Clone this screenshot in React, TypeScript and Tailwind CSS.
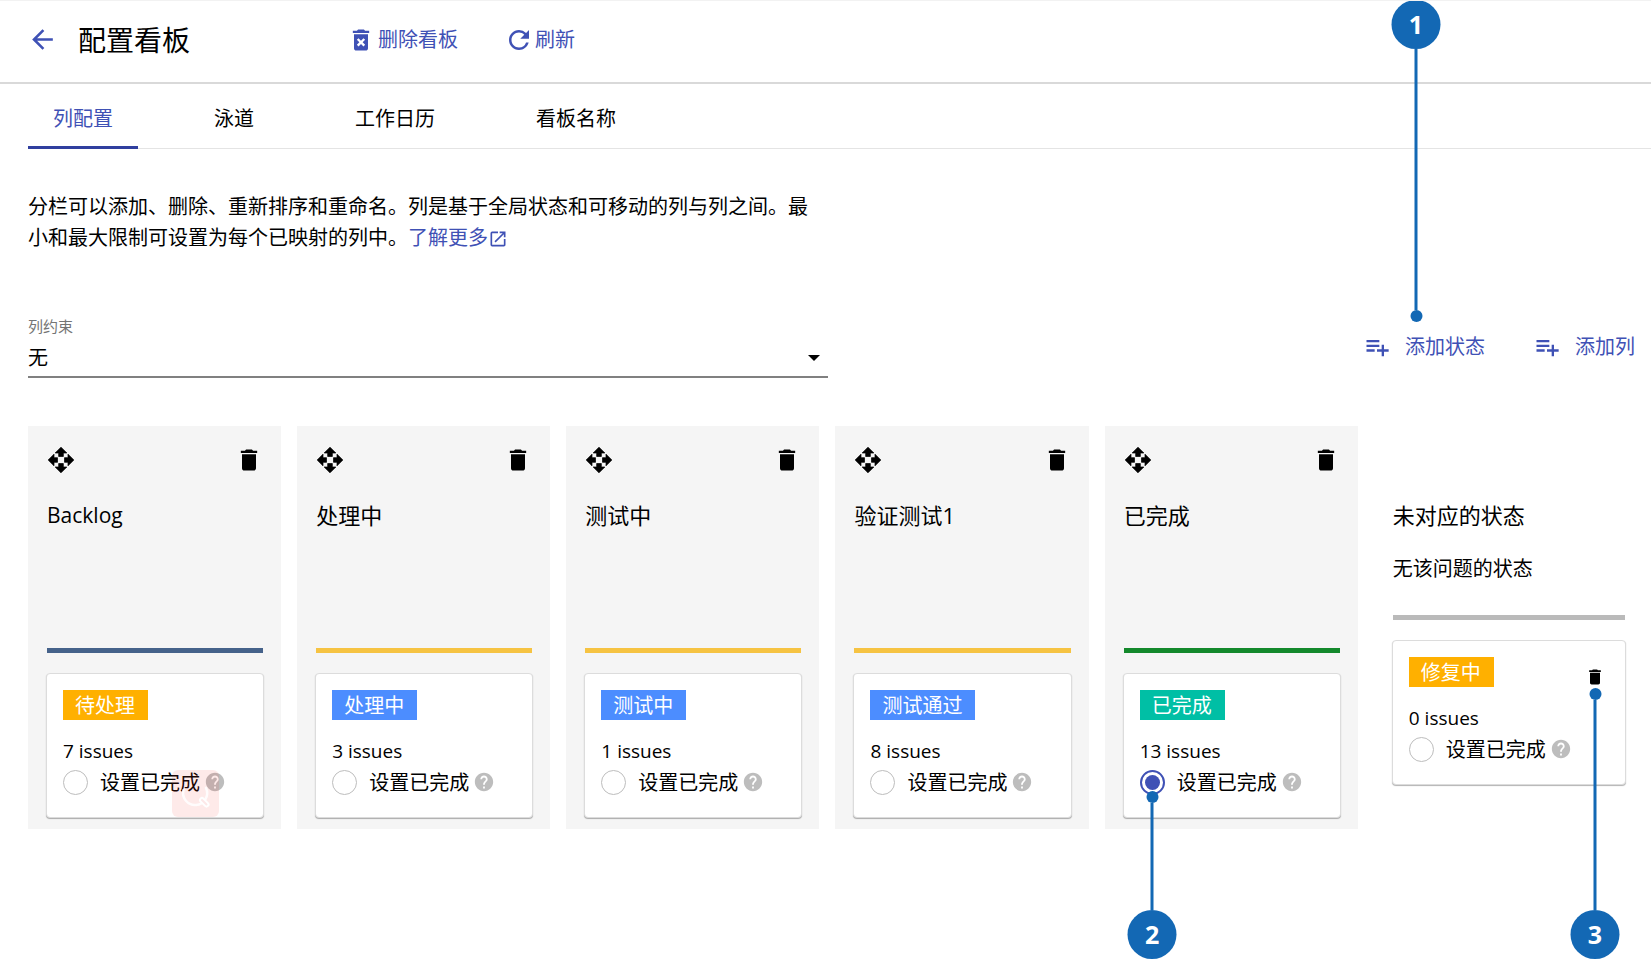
import React from "react";
import {
  MdArrowBack,
  MdDelete,
  MdDeleteForever,
  MdHelp,
  MdOpenInNew,
  MdPlaylistAdd,
  MdRefresh,
} from "react-icons/md";

type Status = {
  id: string;
  tag: string;
  tagClass: string;
  issues: number;
  done?: boolean;
};

type Column = {
  title: string;
  titleClass: string;
  barClass: string;
  status: Status;
};

const columns: Column[] = [
  {
    title: "Backlog",
    titleClass: "text-[21px]",
    barClass: "bg-[#45628a]",
    status: { id: "todo", tag: "待处理", tagClass: "bg-[#ffb000]", issues: 7 },
  },
  {
    title: "处理中",
    titleClass: "text-[22px]",
    barClass: "bg-[#f6c342]",
    status: { id: "doing", tag: "处理中", tagClass: "bg-[#4c8dff]", issues: 3 },
  },
  {
    title: "测试中",
    titleClass: "text-[22px]",
    barClass: "bg-[#f6c342]",
    status: { id: "testing", tag: "测试中", tagClass: "bg-[#4c8dff]", issues: 1 },
  },
  {
    title: "验证测试1",
    titleClass: "text-[22px]",
    barClass: "bg-[#f6c342]",
    status: { id: "passed", tag: "测试通过", tagClass: "bg-[#4c8dff]", issues: 8 },
  },
  {
    title: "已完成",
    titleClass: "text-[22px]",
    barClass: "bg-[#14892c]",
    status: { id: "done", tag: "已完成", tagClass: "bg-[#00bfa5]", issues: 13, done: true },
  },
];

const tabs = ["列配置", "泳道", "工作日历", "看板名称"];

function MoveIcon() {
  return (
    <svg viewBox="0 0 24 24" className="size-7" aria-hidden="true">
      <path
        d="M10 9h4V6h3l-5-5-5 5h3v3zM9 10H6V7l-5 5 5 5v-3h3v-4zM23 12l-5-5v3h-3v4h3v3l5-5zM14 15h-4v3H7l5 5 5-5h-3v-3z"
        fill="currentColor"
        stroke="currentColor"
        strokeWidth="0.6"
      />
    </svg>
  );
}

function Dot() {
  return <span className="size-3 shrink-0 rounded-full bg-[#1368b4]" />;
}

function Badge({ children }: { children: React.ReactNode }) {
  return (
    <span className="flex size-[49px] shrink-0 items-center justify-center rounded-full bg-[#1368b4] text-[25px] leading-none font-bold text-white">
      {children}
    </span>
  );
}

function StatusCard({
  status,
  removable,
  watermark,
  marker,
}: {
  status: Status;
  removable?: boolean;
  watermark?: boolean;
  marker?: boolean;
}) {
  return (
    <article className="relative -mx-px mt-5 rounded-[4px] border border-[#dcdcdc] bg-white px-4 pt-4 pb-5 shadow-[0_1px_1px_rgba(0,0,0,0.3)]">
      <div className="flex items-end justify-between">
        <span className={"pt-px pr-[13px] pl-3 text-[20px] leading-[29px] text-white " + status.tagClass}>
          {status.tag}
        </span>
        {removable && (
          <button type="button" aria-label="删除状态" className="relative mr-1">
            <MdDelete size={20} />
            <span className="pointer-events-none absolute top-[21px] left-1/2 flex -translate-x-1/2 flex-col items-center">
              <Dot />
              <span className="h-[210px] w-[3px] bg-[#1368b4]" />
              <Badge>3</Badge>
            </span>
          </button>
        )}
      </div>
      <p className="mt-4 text-[19px] leading-[30px]">{status.issues} issues</p>
      <div className="mt-px flex h-[30px] items-center">
        <span className="relative flex">
          <input
            type="radio"
            name="done-status"
            id={status.id}
            defaultChecked={status.done}
            className="size-[25px] appearance-none rounded-full border border-[#bdbdbd] bg-white checked:border-2 checked:border-[#3f51b5] checked:bg-[#3f51b5] checked:bg-clip-content checked:p-[3px]"
          />
          {marker && (
            <span className="pointer-events-none absolute top-[21px] left-1/2 z-10 flex -translate-x-1/2 flex-col items-center">
              <Dot />
              <span className="h-[107px] w-[3px] bg-[#1368b4]" />
              <Badge>2</Badge>
            </span>
          )}
        </span>
        <label htmlFor={status.id} className="ml-3 pt-px text-[20px] leading-[30px] whitespace-nowrap">
          设置已完成
        </label>
        <MdHelp size={22} className="ml-1 shrink-0 text-[#bdbdbd]" />
      </div>
      {watermark && (
        <svg
          viewBox="0 0 47 47"
          className="pointer-events-none absolute right-[44px] bottom-0 size-[47px]"
          aria-hidden="true"
        >
          <rect width="47" height="47" rx="6" fill="#f44336" fillOpacity="0.11" />
          <path
            d="M11.5 20A12 12 0 1 0 34 18"
            fill="none"
            stroke="#fff"
            strokeOpacity="0.85"
            strokeWidth="2.5"
            strokeLinecap="round"
          />
          <path d="M30 30l4.500 4.500" fill="none" stroke="#fff" strokeWidth="6" strokeLinecap="round" />
          <path d="M30 30l4.500 4.500" fill="none" stroke="#fde8e8" strokeWidth="2" strokeLinecap="round" />
        </svg>
      )}
    </article>
  );
}

export default function App() {
  return (
    <div
      lang="zh-CN"
      className="min-h-screen overflow-x-hidden border-t border-[#f2f2f2] bg-white pb-[138px] font-['Open_Sans','Noto_Sans_CJK_SC',sans-serif] text-[20px] text-black"
    >
      <header className="flex h-[83px] items-center border-b-2 border-[#d9d9d9] pb-1 pl-[27px]">
        <button type="button" aria-label="返回" className="text-[#3f51b5]">
          <MdArrowBack size={31} />
        </button>
        <h1 className="ml-5 text-[28px] leading-9">配置看板</h1>
        <div className="ml-[157px] flex gap-[46px] leading-[30px] text-[#3f51b5]">
          <button type="button" className="flex items-center gap-[3px]">
            <MdDeleteForever size={28} />
            删除看板
          </button>
          <button type="button" className="flex items-center gap-px">
            <MdRefresh size={30} />
            刷新
          </button>
        </div>
      </header>

      <nav className="ml-7 flex h-[65px] gap-[51px] border-b border-[#e4e4e4]">
        {tabs.map((tab, i) => (
          <a
            key={tab}
            href="#"
            className={
              "-mb-px flex items-center border-b-[3px] px-[25px] pt-2 " +
              (i === 0 ? "border-[#303f9f] text-[#3f51b5]" : "border-transparent")
            }
          >
            {tab}
          </a>
        ))}
      </nav>

      <main className="pr-[7px] pl-7">
        <p className="mt-[42px] max-w-[796px] leading-[31px]">
          分栏可以添加、删除、重新排序和重命名。列是基于全局状态和可移动的列与列之间。最小和最大限制可设置为每个已映射的列中。
          <a href="#" className="text-[#3f51b5]">
            了解更多
            <MdOpenInNew size={20} className="inline align-[-4px]" />
          </a>
        </p>

        <div className="mt-[61px] flex items-end justify-between pr-[9px]">
          <div className="w-1/2 max-w-[800px]">
            <label htmlFor="constraint" className="block text-[15px] leading-6 text-[#757575]">
              列约束
            </label>
            <div className="relative border-b-2 border-[#808080]">
              <select id="constraint" className="block h-[38px] w-full appearance-none bg-transparent pt-px">
                <option>无</option>
              </select>
              <svg
                viewBox="0 0 12 6"
                className="pointer-events-none absolute top-[17px] right-2 h-1.5 w-3"
                aria-hidden="true"
              >
                <path d="M0 0h12L6 6z" />
              </svg>
            </div>
          </div>
          <div className="flex gap-12 pb-4 leading-[30px] text-[#3f51b5]">
            <button type="button" className="relative flex items-center gap-[14px]">
              <MdPlaylistAdd size={28} />
              添加状态
              <span className="pointer-events-none absolute bottom-10 left-[53px] flex -translate-x-1/2 flex-col items-center">
                <Badge>1</Badge>
                <span className="h-[261px] w-[3px] bg-[#1368b4]" />
                <Dot />
              </span>
            </button>
            <button type="button" className="flex items-center gap-[14px]">
              <MdPlaylistAdd size={28} />
              添加列
            </button>
          </div>
        </div>

        <div className="mt-12 grid grid-cols-[repeat(5,minmax(0,253fr))_minmax(0,270fr)] gap-4">
          {columns.map((col, i) => (
            <section key={col.title} className="bg-[#f5f5f5] pt-5 pr-[18px] pb-[11px] pl-[19px]">
              <div className="flex justify-between">
                <button type="button" aria-label="移动列">
                  <MoveIcon />
                </button>
                <button type="button" aria-label="删除列">
                  <MdDelete size={28} />
                </button>
              </div>
              <h2 className={"mt-[26px] h-[148px] leading-[30px] " + col.titleClass}>{col.title}</h2>
              <div className={"h-[5px] " + col.barClass} />
              <StatusCard status={col.status} watermark={i === 0} marker={col.status.done} />
            </section>
          ))}
          <section className="px-[19px] pt-[74px]">
            <h2 className="text-[22px] leading-[30px]">未对应的状态</h2>
            <p className="mt-6 mb-[31px] leading-[30px]">无该问题的状态</p>
            <div className="h-[5px] bg-[#bababa]" />
            <StatusCard
              removable
              status={{ id: "fixing", tag: "修复中", tagClass: "bg-[#ffb000]", issues: 0 }}
            />
          </section>
        </div>
      </main>
    </div>
  );
}
